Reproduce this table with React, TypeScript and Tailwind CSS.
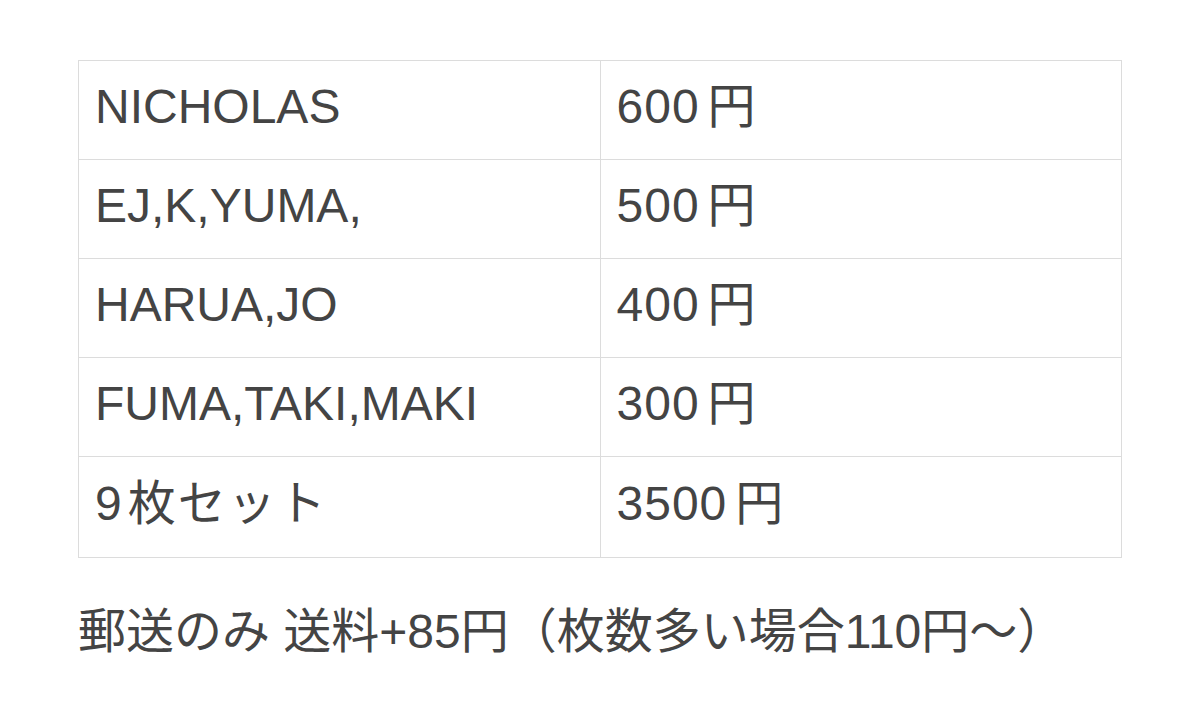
import React from 'react';

const rows: [string, string][] = [
  ['NICHOLAS', '600'],
  ['EJ,K,YUMA,', '500'],
  ['HARUA,JO', '400'],
  ['FUMA,TAKI,MAKI', '300'],
];

export default function App() {
  return (
    <div
      className="w-[1200px] h-[706px] bg-white text-[#444444] overflow-hidden"
      style={{ fontFamily: '"Liberation Sans", "Noto Sans CJK JP", sans-serif' }}
    >
      <div className="pl-[78px] pt-[60px] w-[1122px]">
        {/* Price table */}
        <table className="w-[1044px] border-collapse table-fixed">
          <tbody>
            {rows.map(([name, price]) => (
              <tr key={name} className="h-[99px]">
                <td className="w-1/2 border border-[#dcdcdc] pl-[16px] text-[48px] leading-none align-middle pb-[6px]">
                  {name}
                </td>
                <td className="w-1/2 border border-[#dcdcdc] pl-[16px] text-[48px] leading-none align-middle pb-[6px] tracking-[1px]">
                  {price}
                  <span className="ml-[8px] tracking-normal">円</span>
                </td>
              </tr>
            ))}
            <tr className="h-[101px]">
              <td className="w-1/2 border border-[#dcdcdc] pl-[16px] text-[48px] leading-none align-middle pb-[6px]">
                9<span className="ml-[6px] tracking-[2px]">枚セット</span>
              </td>
              <td className="w-1/2 border border-[#dcdcdc] pl-[16px] text-[48px] leading-none align-middle pb-[6px] tracking-[1px]">
                3500
                <span className="ml-[8px] tracking-normal">円</span>
              </td>
            </tr>
          </tbody>
        </table>

        {/* Shipping note */}
        <p className="mt-[50px] text-[48px] leading-none whitespace-nowrap">
          郵送のみ 送料+85円（枚数多い場合110円〜）
        </p>
      </div>
    </div>
  );
}
